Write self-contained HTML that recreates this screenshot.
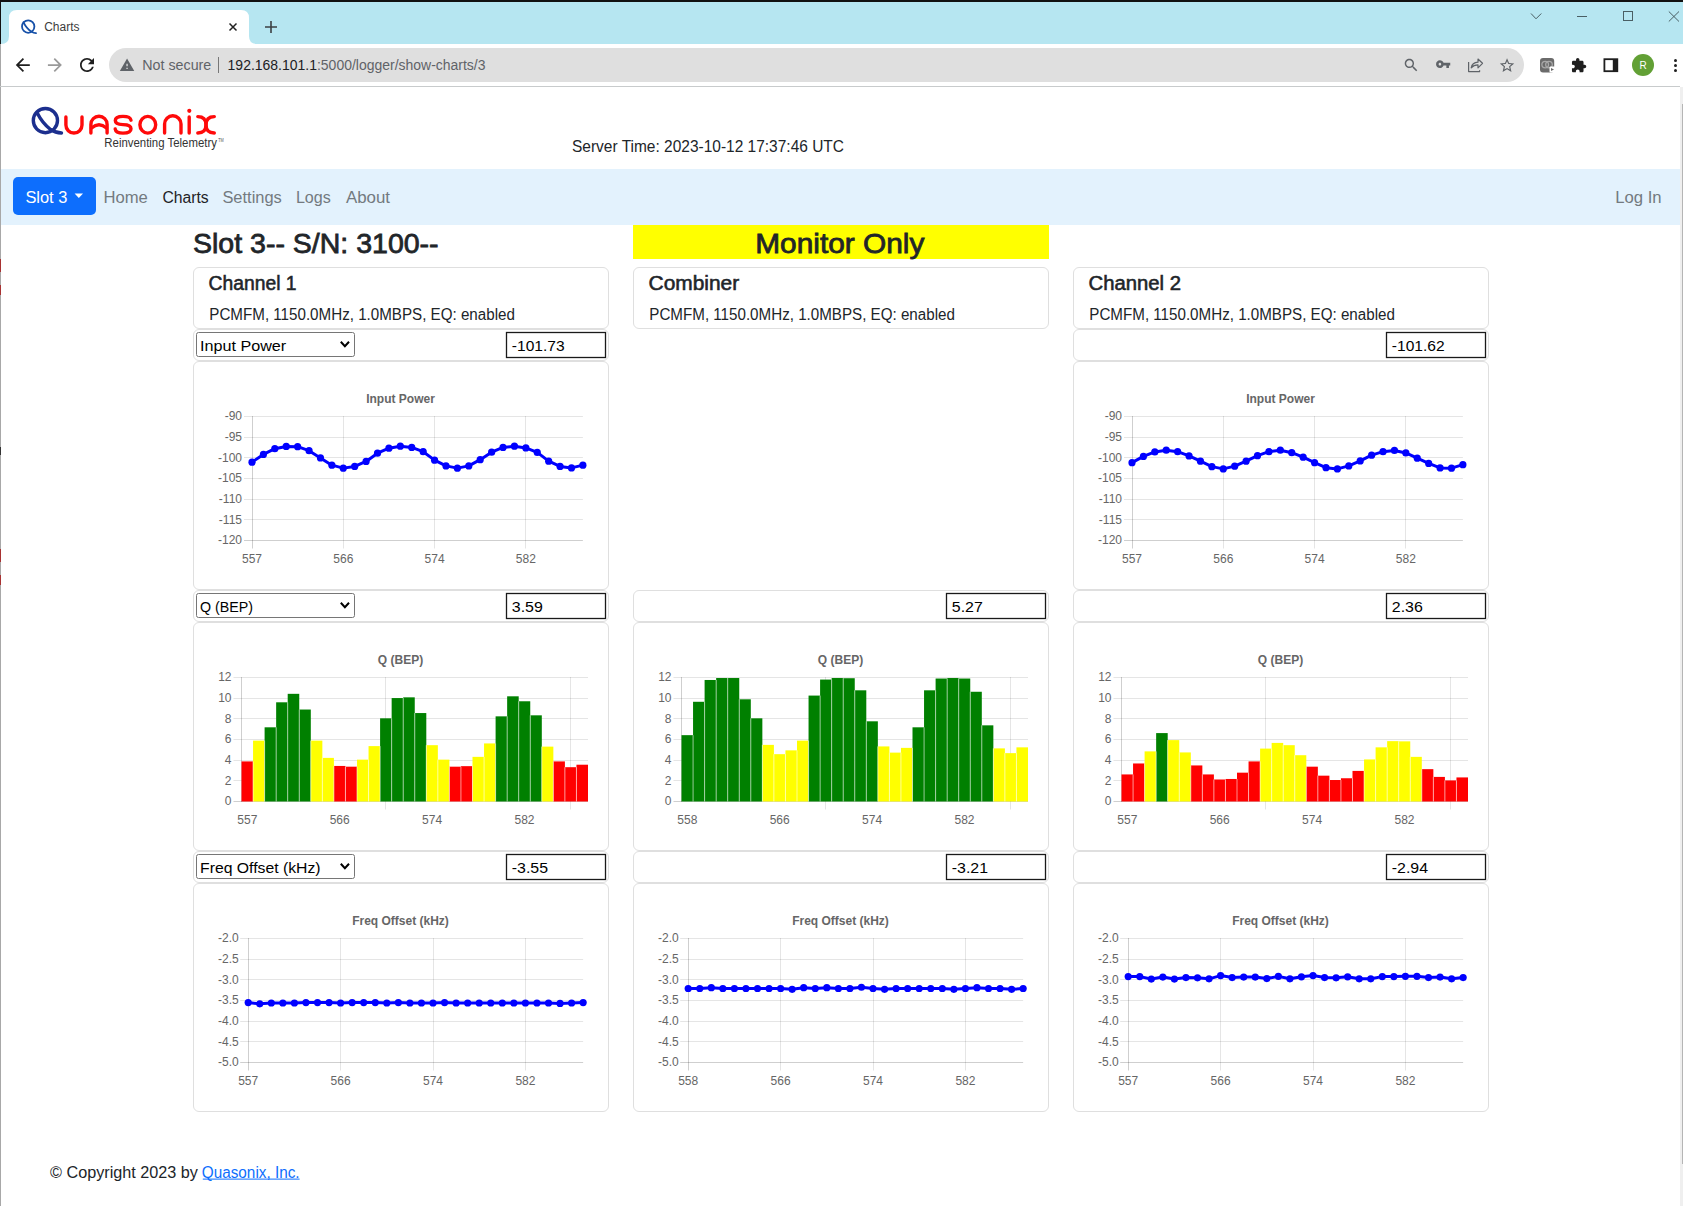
<!DOCTYPE html>
<html><head><meta charset="utf-8"><title>Charts</title>
<style>html,body{margin:0;padding:0;background:#fff;} body{width:1683px;height:1206px;position:relative;overflow:hidden;font-family:"Liberation Sans",sans-serif;}</style>
</head><body>

<div style="position:absolute;left:0;top:0;width:1683px;height:44px;background:#b6e6f1"></div>
<div style="position:absolute;left:0;top:0;width:1683px;height:2px;background:#111"></div>
<div style="position:absolute;left:0;top:0;width:1px;height:44px;background:#111"></div>
<div style="position:absolute;left:0;top:44px;width:1px;height:1162px;background:#a8a8a8"></div>
<div style="position:absolute;left:0;top:259px;width:1px;height:13px;background:#a83232"></div>
<div style="position:absolute;left:0;top:285px;width:1px;height:10px;background:#a83232"></div>
<div style="position:absolute;left:0;top:549px;width:1px;height:13px;background:#a83232"></div>
<div style="position:absolute;left:0;top:575px;width:1px;height:10px;background:#a83232"></div>
<div style="position:absolute;left:0;top:447px;width:1px;height:8px;background:#333"></div>
<div style="position:absolute;left:0;top:86px;width:1680px;height:1px;background:#c8cbcc"></div>
<div style="position:absolute;left:1680px;top:87px;width:3px;height:1119px;background:#efefef"></div>
<div style="position:absolute;left:1682px;top:104px;width:1px;height:1060px;background:#b5b5b5"></div>
<svg style="position:absolute;left:0;top:0" width="1683" height="87" viewBox="0 0 1683 87">
  <path d="M1 44 Q9 44 9 36 V18 Q9 10 17 10 H241 Q249 10 249 18 V36 Q249 44 257 44 Z" fill="#fff"/>
  <rect x="1" y="44" width="1679" height="42" fill="#fff"/>
  <!-- favicon Q -->
  <g fill="none" stroke="#1650a8" stroke-width="1.8" stroke-linecap="round">
    <circle cx="28.2" cy="26.6" r="6.2"/>
    <path d="M23.4 22.2 C25.5 26.5 28.5 30 31.5 31.8 C33 32.7 34.5 33.1 36 33.2"/>
  </g>
  <text x="44.2" y="31" font-family="Liberation Sans" font-size="12" fill="#3c3c3c" textLength="35.3" lengthAdjust="spacingAndGlyphs">Charts</text>
  <g stroke="#222" stroke-width="1.5" stroke-linecap="butt">
    <path d="M229.5 23.5 L236.5 30.5 M236.5 23.5 L229.5 30.5"/>
  </g>
  <g stroke="#3c4043" stroke-width="1.6">
    <path d="M271 21 V33 M265 27 H277"/>
  </g>
  <!-- window controls -->
  <g fill="none" stroke="#4a5f64" stroke-width="1">
    <path d="M1531 13.5 L1536 18.8 L1541.3 13.5"/>
    <path d="M1577 16.5 H1587"/>
    <rect x="1623.5" y="11.5" width="9" height="9"/>
    <path d="M1668.8 11.5 L1679 21.5 M1679 11.5 L1668.8 21.5"/>
  </g>
  <!-- nav icons -->
  <g transform="translate(12.3 54.5) scale(0.875)" fill="#1f1f1f"><path d="M20 11H7.83l5.59-5.59L12 4l-8 8 8 8 1.41-1.41L7.83 13H20v-2z"/></g>
  <g transform="translate(44.4 54.5) scale(0.875)" fill="#9a9a9a"><path d="M12 4l-1.41 1.41L16.17 11H4v2h12.17l-5.58 5.59L12 20l8-8z"/></g>
  <g transform="translate(76.5 54.5) scale(0.875)" fill="#1f1f1f"><path d="M17.65 6.35C16.2 4.9 14.21 4 12 4c-4.42 0-7.99 3.58-7.99 8s3.57 8 7.99 8c3.73 0 6.84-2.55 7.73-6h-2.08c-.82 2.33-3.04 4-5.65 4-3.31 0-6-2.69-6-6s2.69-6 6-6c1.66 0 3.14.69 4.22 1.78L13 11h7V4l-2.35 2.35z"/></g>
  <!-- omnibox -->
  <rect x="109" y="48" width="1415" height="34" rx="17" fill="#dfdfdf"/>
  <g transform="translate(119.2 57.2) scale(0.655)" fill="#5f6368"><path d="M1 21h22L12 2 1 21zm12-3h-2v-2h2v2zm0-4h-2v-4h2v4z"/></g>
  <text x="142.2" y="70" font-family="Liberation Sans" font-size="14" fill="#5f6368" textLength="69.1" lengthAdjust="spacingAndGlyphs">Not secure</text>
  <rect x="218" y="57" width="1" height="16" fill="#777"/>
  <text x="227.6" y="70" font-family="Liberation Sans" font-size="14" textLength="257.9" lengthAdjust="spacingAndGlyphs"><tspan fill="#202124">192.168.101.1</tspan><tspan fill="#5f6368">:5000/logger/show-charts/3</tspan></text>
  <g transform="translate(1402.6 56.6) scale(0.714)" fill="#5f6368"><path d="M15.5 14h-.79l-.28-.27C15.41 12.59 16 11.11 16 9.5 16 5.91 13.09 3 9.5 3S3 5.91 3 9.5 5.91 16 9.5 16c1.61 0 3.09-.59 4.23-1.57l.27.28v.79l5 4.99L20.49 19l-4.99-5zm-6 0C7.01 14 5 11.99 5 9.5S7.01 5 9.5 5 14 7.01 14 9.5 11.99 14 9.5 14z"/></g>
  <g transform="translate(1435.4 56.4) scale(0.645)" fill="#5f6368"><path d="M12.65 10C11.83 7.67 9.61 6 7 6c-3.31 0-6 2.69-6 6s2.69 6 6 6c2.61 0 4.83-1.67 5.65-4H17v4h4v-4h2v-4H12.65zM7 14c-1.1 0-2-.9-2-2s.9-2 2-2 2 .9 2 2-.9 2-2 2z"/></g>
  <g fill="none" stroke="#5f6368" stroke-width="1.2" stroke-linejoin="round">
    <path d="M1468.6 62 V71.6 H1479.6 V70.2"/>
    <path d="M1471.2 67.8 C1471.8 64.4 1474.2 62.4 1478 62.2 V59 L1482.5 63.3 L1478 67.8 V64.8 C1475.2 64.8 1472.8 65.8 1471.2 67.8 Z"/>
  </g>
  <g transform="translate(1498.4 56.8) scale(0.72)" fill="#5f6368"><path d="M22 9.24l-7.19-.62L12 2 9.19 8.63 2 9.24l5.46 4.73L5.82 21 12 17.27 18.18 21l-1.63-7.03L22 9.24zM12 15.4l-3.76 2.27 1-4.28-3.32-2.88 4.38-.38L12 6.1l1.71 4.04 4.38.38-3.32 2.88 1 4.28L12 15.4z"/></g>
  <!-- extension grey -->
  <rect x="1540" y="58" width="14.2" height="14.4" rx="3" fill="#6b6b6b"/>
  <circle cx="1545.2" cy="64.6" r="3.3" fill="none" stroke="#a8a8a8" stroke-width="1.3"/>
  <circle cx="1549" cy="64.6" r="3.3" fill="none" stroke="#a8a8a8" stroke-width="1.3"/>
  <rect x="1549.5" y="66.5" width="6" height="6" rx="1" fill="#fff"/>
  <path d="M1551 68 L1554 69.5 L1551 71 Z" fill="#6b6b6b"/>
  <g transform="translate(1570.6 57.3) scale(0.68)" fill="#1f1f1f"><path d="M20.5 11H19V7c0-1.1-.9-2-2-2h-4V3.5C13 2.12 11.88 1 10.5 1S8 2.12 8 3.5V5H4c-1.1 0-1.99.9-1.99 2v3.8H3.5c1.49 0 2.7 1.21 2.7 2.7s-1.21 2.7-2.7 2.7H2V20c0 1.1.9 2 2 2h3.8v-1.5c0-1.49 1.21-2.7 2.7-2.7 1.49 0 2.7 1.21 2.7 2.7V22H17c1.1 0 2-.9 2-2v-4h1.5c1.38 0 2.5-1.12 2.5-2.5S21.88 11 20.5 11z"/></g>
  <rect x="1604.4" y="59.2" width="12.9" height="12" fill="none" stroke="#1f1f1f" stroke-width="1.8"/>
  <rect x="1612.8" y="59.2" width="4.9" height="12" fill="#1f1f1f"/>
  <circle cx="1643" cy="65" r="11" fill="#62a035"/>
  <text x="1643.2" y="69" text-anchor="middle" font-family="Liberation Sans" font-size="10" fill="#fff">R</text>
  <g fill="#1f1f1f"><circle cx="1675.5" cy="60.4" r="1.5"/><circle cx="1675.5" cy="65.4" r="1.5"/><circle cx="1675.5" cy="70.4" r="1.5"/></g>
</svg>

<svg style="position:absolute;left:0;top:0" width="1683" height="1206" viewBox="0 0 1683 1206" font-family="Liberation Sans">

<g fill="none" stroke-linecap="round" stroke-width="3.4">
  <circle stroke="#1c2f8e" cx="45.4" cy="120.6" r="12.1"/>
  <path stroke="#1c2f8e" d="M37.4 113.2 C40.5 119.5 45 125 50.5 129.5 C53.5 131.5 57 132.8 61.5 133"/>
  <path stroke="#ff0a0a" d="M65.9 117 V125 A8.05 8.05 0 0 0 82 125 V117"/>
  <path stroke="#ff0a0a" d="M90.9 133 V124.4 A8.1 8.1 0 0 1 107.1 124.4 V133"/>
  <path stroke="#ff0a0a" d="M91.5 128 Q99 121.5 106.5 128"/>
  <path stroke="#ff0a0a" d="M131 120.2 C130.5 117.6 127.6 116.4 123 116.4 C118.2 116.4 115.3 117.8 115.3 120.6 C115.3 123.6 118.2 124.6 123 124.6 C128 124.6 131 125.6 131 128.8 C131 131.8 128 133.1 123 133.1 C118.4 133.1 115.6 131.8 115.2 129"/>
  <ellipse stroke="#ff0a0a" cx="147.8" cy="124.75" rx="7.9" ry="8.4"/>
  <path stroke="#ff0a0a" d="M164.6 133 V124 A8.2 8.2 0 0 1 181 124 V133"/>
  <path stroke="#ff0a0a" d="M189.2 117 V133"/>
  <path stroke="#ff0a0a" d="M197.8 116.6 C204 116.6 206 120 206 124.8 C206 129.5 204 133 197.8 133"/>
  <path stroke="#ff0a0a" d="M214.3 116.6 C208 116.6 206 120 206 124.8 C206 129.5 208 133 214.3 133"/>
</g>
<circle cx="189.3" cy="110.8" r="2.1" fill="#ff0a0a"/>
<text x="104.3" y="147" font-size="12" fill="#333" text-anchor="start" textLength="112.7" lengthAdjust="spacingAndGlyphs">Reinventing Telemetry</text>
<text x="218.3" y="142" font-size="5" fill="#555" textLength="5.5" lengthAdjust="spacingAndGlyphs">TM</text>

<text x="572" y="151.6" font-size="16.4" fill="#212529" text-anchor="start" textLength="272" lengthAdjust="spacingAndGlyphs">Server Time: 2023-10-12 17:37:46 UTC</text>
<rect x="1" y="169" width="1679" height="56" fill="#e3f2fd"/>
<rect x="13" y="177" width="83" height="38" rx="5" fill="#0d6efd"/>
<text x="25.4" y="202.6" font-size="16" fill="#fff" text-anchor="start" textLength="42" lengthAdjust="spacingAndGlyphs">Slot 3</text>
<path d="M74.6 193.6 H83 L78.8 197.9 Z" fill="#fff"/>
<text x="103.4" y="202.8" font-size="16" fill="#737a80" text-anchor="start" textLength="44.4" lengthAdjust="spacingAndGlyphs">Home</text>
<text x="162.4" y="202.8" font-size="16" fill="#1f2326" text-anchor="start" textLength="46.3" lengthAdjust="spacingAndGlyphs">Charts</text>
<text x="222.4" y="202.8" font-size="16" fill="#737a80" text-anchor="start" textLength="59.4" lengthAdjust="spacingAndGlyphs">Settings</text>
<text x="295.9" y="202.8" font-size="16" fill="#737a80" text-anchor="start" textLength="34.9" lengthAdjust="spacingAndGlyphs">Logs</text>
<text x="345.9" y="202.8" font-size="16" fill="#737a80" text-anchor="start" textLength="44.1" lengthAdjust="spacingAndGlyphs">About</text>
<text x="1615.2" y="202.8" font-size="16" fill="#737a80" text-anchor="start" textLength="46.4" lengthAdjust="spacingAndGlyphs">Log In</text>
<text x="193" y="253.1" font-size="28" fill="#212529" stroke="#212529" stroke-width="0.78" text-anchor="start" textLength="245.6" lengthAdjust="spacingAndGlyphs">Slot 3-- S/N: 3100--</text>
<rect x="633" y="225" width="416" height="34" fill="#ffff00"/>
<text x="755.2" y="252.8" font-size="28" fill="#212529" stroke="#212529" stroke-width="0.78" text-anchor="start" textLength="169.2" lengthAdjust="spacingAndGlyphs">Monitor Only</text>
<rect x="193.5" y="267.5" width="415" height="61" rx="5.5" fill="#fff" stroke="#dfdfdf" stroke-width="1"/>
<text x="208.6" y="289.8" font-size="20" fill="#212529" stroke="#212529" stroke-width="0.56" text-anchor="start" textLength="87.9" lengthAdjust="spacingAndGlyphs">Channel 1</text>
<text x="209.3" y="319.9" font-size="16" fill="#212529" text-anchor="start" textLength="305.6" lengthAdjust="spacingAndGlyphs">PCMFM, 1150.0MHz, 1.0MBPS, EQ: enabled</text>
<rect x="193.5" y="329.5" width="415" height="31" rx="5.5" fill="#fff" stroke="#dfdfdf" stroke-width="1"/>
<rect x="193.5" y="590.5" width="415" height="31" rx="5.5" fill="#fff" stroke="#dfdfdf" stroke-width="1"/>
<rect x="193.5" y="851.5" width="415" height="31" rx="5.5" fill="#fff" stroke="#dfdfdf" stroke-width="1"/>
<rect x="193.5" y="361.5" width="415" height="228" rx="5.5" fill="#fff" stroke="#dfdfdf" stroke-width="1"/>
<rect x="193.5" y="622.5" width="415" height="228" rx="5.5" fill="#fff" stroke="#dfdfdf" stroke-width="1"/>
<rect x="193.5" y="883.5" width="415" height="228" rx="5.5" fill="#fff" stroke="#dfdfdf" stroke-width="1"/>
<rect x="633.5" y="267.5" width="415" height="61" rx="5.5" fill="#fff" stroke="#dfdfdf" stroke-width="1"/>
<text x="648.6" y="289.8" font-size="20" fill="#212529" stroke="#212529" stroke-width="0.56" text-anchor="start" textLength="90.6" lengthAdjust="spacingAndGlyphs">Combiner</text>
<text x="649.3" y="319.9" font-size="16" fill="#212529" text-anchor="start" textLength="305.6" lengthAdjust="spacingAndGlyphs">PCMFM, 1150.0MHz, 1.0MBPS, EQ: enabled</text>
<rect x="633.5" y="590.5" width="415" height="31" rx="5.5" fill="#fff" stroke="#dfdfdf" stroke-width="1"/>
<rect x="633.5" y="851.5" width="415" height="31" rx="5.5" fill="#fff" stroke="#dfdfdf" stroke-width="1"/>
<rect x="633.5" y="622.5" width="415" height="228" rx="5.5" fill="#fff" stroke="#dfdfdf" stroke-width="1"/>
<rect x="633.5" y="883.5" width="415" height="228" rx="5.5" fill="#fff" stroke="#dfdfdf" stroke-width="1"/>
<rect x="1073.5" y="267.5" width="415" height="61" rx="5.5" fill="#fff" stroke="#dfdfdf" stroke-width="1"/>
<text x="1088.6" y="289.8" font-size="20" fill="#212529" stroke="#212529" stroke-width="0.56" text-anchor="start" textLength="92.4" lengthAdjust="spacingAndGlyphs">Channel 2</text>
<text x="1089.3" y="319.9" font-size="16" fill="#212529" text-anchor="start" textLength="305.6" lengthAdjust="spacingAndGlyphs">PCMFM, 1150.0MHz, 1.0MBPS, EQ: enabled</text>
<rect x="1073.5" y="329.5" width="415" height="31" rx="5.5" fill="#fff" stroke="#dfdfdf" stroke-width="1"/>
<rect x="1073.5" y="590.5" width="415" height="31" rx="5.5" fill="#fff" stroke="#dfdfdf" stroke-width="1"/>
<rect x="1073.5" y="851.5" width="415" height="31" rx="5.5" fill="#fff" stroke="#dfdfdf" stroke-width="1"/>
<rect x="1073.5" y="361.5" width="415" height="228" rx="5.5" fill="#fff" stroke="#dfdfdf" stroke-width="1"/>
<rect x="1073.5" y="622.5" width="415" height="228" rx="5.5" fill="#fff" stroke="#dfdfdf" stroke-width="1"/>
<rect x="1073.5" y="883.5" width="415" height="228" rx="5.5" fill="#fff" stroke="#dfdfdf" stroke-width="1"/>
<rect x="196.5" y="332.5" width="158" height="24" rx="2" fill="#fff" stroke="#767676"/>
<text x="200.0" y="350.9" font-size="15" fill="#000" text-anchor="start" textLength="86.2" lengthAdjust="spacingAndGlyphs">Input Power</text>
<path d="M340.8 341.8 L344.9 346.2 L349 341.8" fill="none" stroke="#000" stroke-width="2"/>
<rect x="196.5" y="593.5" width="158" height="24" rx="2" fill="#fff" stroke="#767676"/>
<text x="200.0" y="611.9" font-size="15" fill="#000" text-anchor="start" textLength="53" lengthAdjust="spacingAndGlyphs">Q (BEP)</text>
<path d="M340.8 602.8 L344.9 607.2 L349 602.8" fill="none" stroke="#000" stroke-width="2"/>
<rect x="196.5" y="854.5" width="158" height="24" rx="2" fill="#fff" stroke="#767676"/>
<text x="200.0" y="872.9" font-size="15" fill="#000" text-anchor="start" textLength="120.6" lengthAdjust="spacingAndGlyphs">Freq Offset (kHz)</text>
<path d="M340.8 863.8 L344.9 868.2 L349 863.8" fill="none" stroke="#000" stroke-width="2"/>
<rect x="506.5" y="332.5" width="99" height="25" fill="#fff" stroke="#1a1a1a" stroke-width="1.3"/>
<text x="511.8" y="350.8" font-size="15" fill="#000" text-anchor="start" textLength="52.8" lengthAdjust="spacingAndGlyphs">-101.73</text>
<rect x="506.5" y="593.5" width="99" height="25" fill="#fff" stroke="#1a1a1a" stroke-width="1.3"/>
<text x="511.8" y="611.8" font-size="15" fill="#000" text-anchor="start" textLength="31.0" lengthAdjust="spacingAndGlyphs">3.59</text>
<rect x="506.5" y="854.5" width="99" height="25" fill="#fff" stroke="#1a1a1a" stroke-width="1.3"/>
<text x="511.8" y="872.8" font-size="15" fill="#000" text-anchor="start" textLength="36.2" lengthAdjust="spacingAndGlyphs">-3.55</text>
<rect x="946.5" y="593.5" width="99" height="25" fill="#fff" stroke="#1a1a1a" stroke-width="1.3"/>
<text x="951.8" y="611.8" font-size="15" fill="#000" text-anchor="start" textLength="31.0" lengthAdjust="spacingAndGlyphs">5.27</text>
<rect x="946.5" y="854.5" width="99" height="25" fill="#fff" stroke="#1a1a1a" stroke-width="1.3"/>
<text x="951.8" y="872.8" font-size="15" fill="#000" text-anchor="start" textLength="36.2" lengthAdjust="spacingAndGlyphs">-3.21</text>
<rect x="1386.5" y="332.5" width="99" height="25" fill="#fff" stroke="#1a1a1a" stroke-width="1.3"/>
<text x="1391.8" y="350.8" font-size="15" fill="#000" text-anchor="start" textLength="52.8" lengthAdjust="spacingAndGlyphs">-101.62</text>
<rect x="1386.5" y="593.5" width="99" height="25" fill="#fff" stroke="#1a1a1a" stroke-width="1.3"/>
<text x="1391.8" y="611.8" font-size="15" fill="#000" text-anchor="start" textLength="31.0" lengthAdjust="spacingAndGlyphs">2.36</text>
<rect x="1386.5" y="854.5" width="99" height="25" fill="#fff" stroke="#1a1a1a" stroke-width="1.3"/>
<text x="1391.8" y="872.8" font-size="15" fill="#000" text-anchor="start" textLength="36.2" lengthAdjust="spacingAndGlyphs">-2.94</text>
<line x1="244.0" y1="416.5" x2="582.9" y2="416.5" stroke="rgba(0,0,0,0.1)" stroke-width="1"/>
<text x="242" y="420.4" text-anchor="end" font-size="12" fill="#666">-90</text>
<line x1="244.0" y1="437.5" x2="582.9" y2="437.5" stroke="rgba(0,0,0,0.1)" stroke-width="1"/>
<text x="242" y="441.1" text-anchor="end" font-size="12" fill="#666">-95</text>
<line x1="244.0" y1="457.5" x2="582.9" y2="457.5" stroke="rgba(0,0,0,0.1)" stroke-width="1"/>
<text x="242" y="461.7" text-anchor="end" font-size="12" fill="#666">-100</text>
<line x1="244.0" y1="478.5" x2="582.9" y2="478.5" stroke="rgba(0,0,0,0.1)" stroke-width="1"/>
<text x="242" y="482.4" text-anchor="end" font-size="12" fill="#666">-105</text>
<line x1="244.0" y1="499.5" x2="582.9" y2="499.5" stroke="rgba(0,0,0,0.1)" stroke-width="1"/>
<text x="242" y="503.1" text-anchor="end" font-size="12" fill="#666">-110</text>
<line x1="244.0" y1="519.5" x2="582.9" y2="519.5" stroke="rgba(0,0,0,0.1)" stroke-width="1"/>
<text x="242" y="523.7" text-anchor="end" font-size="12" fill="#666">-115</text>
<line x1="244.0" y1="540.5" x2="582.9" y2="540.5" stroke="rgba(0,0,0,0.19)" stroke-width="1"/>
<text x="242" y="544.4" text-anchor="end" font-size="12" fill="#666">-120</text>
<line x1="252.5" y1="416.0" x2="252.5" y2="548.5" stroke="rgba(0,0,0,0.19)" stroke-width="1"/>
<text x="252.0" y="562.5" text-anchor="middle" font-size="12" fill="#666">557</text>
<line x1="343.5" y1="416.0" x2="343.5" y2="548.5" stroke="rgba(0,0,0,0.1)" stroke-width="1"/>
<text x="343.3" y="562.5" text-anchor="middle" font-size="12" fill="#666">566</text>
<line x1="434.5" y1="416.0" x2="434.5" y2="548.5" stroke="rgba(0,0,0,0.1)" stroke-width="1"/>
<text x="434.6" y="562.5" text-anchor="middle" font-size="12" fill="#666">574</text>
<line x1="525.5" y1="416.0" x2="525.5" y2="548.5" stroke="rgba(0,0,0,0.1)" stroke-width="1"/>
<text x="525.8" y="562.5" text-anchor="middle" font-size="12" fill="#666">582</text>
<text x="400.5" y="402.6" text-anchor="middle" font-size="12" font-weight="bold" fill="#666">Input Power</text>
<path d="M252.00 462.16 L263.41 454.42 L274.82 448.68 L286.23 446.44 L297.64 446.69 L309.05 450.68 L320.46 457.92 L331.87 465.15 L343.28 468.14 L354.69 466.40 L366.10 461.41 L377.51 453.18 L388.92 448.19 L400.33 446.19 L411.74 447.44 L423.16 451.68 L434.57 460.16 L445.98 465.90 L457.39 468.14 L468.80 465.90 L480.21 459.66 L491.62 452.18 L503.03 447.44 L514.44 446.19 L525.85 447.94 L537.26 452.43 L548.67 461.16 L560.08 466.40 L571.49 467.90 L582.90 465.15" fill="none" stroke="#0000ff" stroke-width="3" stroke-linejoin="round"/>
<circle cx="252.00" cy="462.16" r="3.6" fill="#0000ff"/>
<circle cx="263.41" cy="454.42" r="3.6" fill="#0000ff"/>
<circle cx="274.82" cy="448.68" r="3.6" fill="#0000ff"/>
<circle cx="286.23" cy="446.44" r="3.6" fill="#0000ff"/>
<circle cx="297.64" cy="446.69" r="3.6" fill="#0000ff"/>
<circle cx="309.05" cy="450.68" r="3.6" fill="#0000ff"/>
<circle cx="320.46" cy="457.92" r="3.6" fill="#0000ff"/>
<circle cx="331.87" cy="465.15" r="3.6" fill="#0000ff"/>
<circle cx="343.28" cy="468.14" r="3.6" fill="#0000ff"/>
<circle cx="354.69" cy="466.40" r="3.6" fill="#0000ff"/>
<circle cx="366.10" cy="461.41" r="3.6" fill="#0000ff"/>
<circle cx="377.51" cy="453.18" r="3.6" fill="#0000ff"/>
<circle cx="388.92" cy="448.19" r="3.6" fill="#0000ff"/>
<circle cx="400.33" cy="446.19" r="3.6" fill="#0000ff"/>
<circle cx="411.74" cy="447.44" r="3.6" fill="#0000ff"/>
<circle cx="423.16" cy="451.68" r="3.6" fill="#0000ff"/>
<circle cx="434.57" cy="460.16" r="3.6" fill="#0000ff"/>
<circle cx="445.98" cy="465.90" r="3.6" fill="#0000ff"/>
<circle cx="457.39" cy="468.14" r="3.6" fill="#0000ff"/>
<circle cx="468.80" cy="465.90" r="3.6" fill="#0000ff"/>
<circle cx="480.21" cy="459.66" r="3.6" fill="#0000ff"/>
<circle cx="491.62" cy="452.18" r="3.6" fill="#0000ff"/>
<circle cx="503.03" cy="447.44" r="3.6" fill="#0000ff"/>
<circle cx="514.44" cy="446.19" r="3.6" fill="#0000ff"/>
<circle cx="525.85" cy="447.94" r="3.6" fill="#0000ff"/>
<circle cx="537.26" cy="452.43" r="3.6" fill="#0000ff"/>
<circle cx="548.67" cy="461.16" r="3.6" fill="#0000ff"/>
<circle cx="560.08" cy="466.40" r="3.6" fill="#0000ff"/>
<circle cx="571.49" cy="467.90" r="3.6" fill="#0000ff"/>
<circle cx="582.90" cy="465.15" r="3.6" fill="#0000ff"/>
<line x1="1124.0" y1="416.5" x2="1462.9" y2="416.5" stroke="rgba(0,0,0,0.1)" stroke-width="1"/>
<text x="1122" y="420.4" text-anchor="end" font-size="12" fill="#666">-90</text>
<line x1="1124.0" y1="437.5" x2="1462.9" y2="437.5" stroke="rgba(0,0,0,0.1)" stroke-width="1"/>
<text x="1122" y="441.1" text-anchor="end" font-size="12" fill="#666">-95</text>
<line x1="1124.0" y1="457.5" x2="1462.9" y2="457.5" stroke="rgba(0,0,0,0.1)" stroke-width="1"/>
<text x="1122" y="461.7" text-anchor="end" font-size="12" fill="#666">-100</text>
<line x1="1124.0" y1="478.5" x2="1462.9" y2="478.5" stroke="rgba(0,0,0,0.1)" stroke-width="1"/>
<text x="1122" y="482.4" text-anchor="end" font-size="12" fill="#666">-105</text>
<line x1="1124.0" y1="499.5" x2="1462.9" y2="499.5" stroke="rgba(0,0,0,0.1)" stroke-width="1"/>
<text x="1122" y="503.1" text-anchor="end" font-size="12" fill="#666">-110</text>
<line x1="1124.0" y1="519.5" x2="1462.9" y2="519.5" stroke="rgba(0,0,0,0.1)" stroke-width="1"/>
<text x="1122" y="523.7" text-anchor="end" font-size="12" fill="#666">-115</text>
<line x1="1124.0" y1="540.5" x2="1462.9" y2="540.5" stroke="rgba(0,0,0,0.19)" stroke-width="1"/>
<text x="1122" y="544.4" text-anchor="end" font-size="12" fill="#666">-120</text>
<line x1="1132.5" y1="416.0" x2="1132.5" y2="548.5" stroke="rgba(0,0,0,0.19)" stroke-width="1"/>
<text x="1132.0" y="562.5" text-anchor="middle" font-size="12" fill="#666">557</text>
<line x1="1223.5" y1="416.0" x2="1223.5" y2="548.5" stroke="rgba(0,0,0,0.1)" stroke-width="1"/>
<text x="1223.3" y="562.5" text-anchor="middle" font-size="12" fill="#666">566</text>
<line x1="1314.5" y1="416.0" x2="1314.5" y2="548.5" stroke="rgba(0,0,0,0.1)" stroke-width="1"/>
<text x="1314.6" y="562.5" text-anchor="middle" font-size="12" fill="#666">574</text>
<line x1="1405.5" y1="416.0" x2="1405.5" y2="548.5" stroke="rgba(0,0,0,0.1)" stroke-width="1"/>
<text x="1405.8" y="562.5" text-anchor="middle" font-size="12" fill="#666">582</text>
<text x="1280.5" y="402.6" text-anchor="middle" font-size="12" font-weight="bold" fill="#666">Input Power</text>
<path d="M1132.00 462.66 L1143.41 456.42 L1154.82 451.93 L1166.23 450.18 L1177.64 451.68 L1189.05 455.92 L1200.46 461.16 L1211.87 466.65 L1223.28 468.89 L1234.69 466.15 L1246.10 461.16 L1257.51 455.67 L1268.92 451.68 L1280.33 450.18 L1291.74 452.68 L1303.16 457.17 L1314.57 462.66 L1325.98 467.65 L1337.39 468.89 L1348.80 465.90 L1360.21 460.91 L1371.62 455.17 L1383.03 451.68 L1394.44 450.43 L1405.85 452.93 L1417.26 458.17 L1428.67 463.40 L1440.08 467.90 L1451.49 468.14 L1462.90 464.65" fill="none" stroke="#0000ff" stroke-width="3" stroke-linejoin="round"/>
<circle cx="1132.00" cy="462.66" r="3.6" fill="#0000ff"/>
<circle cx="1143.41" cy="456.42" r="3.6" fill="#0000ff"/>
<circle cx="1154.82" cy="451.93" r="3.6" fill="#0000ff"/>
<circle cx="1166.23" cy="450.18" r="3.6" fill="#0000ff"/>
<circle cx="1177.64" cy="451.68" r="3.6" fill="#0000ff"/>
<circle cx="1189.05" cy="455.92" r="3.6" fill="#0000ff"/>
<circle cx="1200.46" cy="461.16" r="3.6" fill="#0000ff"/>
<circle cx="1211.87" cy="466.65" r="3.6" fill="#0000ff"/>
<circle cx="1223.28" cy="468.89" r="3.6" fill="#0000ff"/>
<circle cx="1234.69" cy="466.15" r="3.6" fill="#0000ff"/>
<circle cx="1246.10" cy="461.16" r="3.6" fill="#0000ff"/>
<circle cx="1257.51" cy="455.67" r="3.6" fill="#0000ff"/>
<circle cx="1268.92" cy="451.68" r="3.6" fill="#0000ff"/>
<circle cx="1280.33" cy="450.18" r="3.6" fill="#0000ff"/>
<circle cx="1291.74" cy="452.68" r="3.6" fill="#0000ff"/>
<circle cx="1303.16" cy="457.17" r="3.6" fill="#0000ff"/>
<circle cx="1314.57" cy="462.66" r="3.6" fill="#0000ff"/>
<circle cx="1325.98" cy="467.65" r="3.6" fill="#0000ff"/>
<circle cx="1337.39" cy="468.89" r="3.6" fill="#0000ff"/>
<circle cx="1348.80" cy="465.90" r="3.6" fill="#0000ff"/>
<circle cx="1360.21" cy="460.91" r="3.6" fill="#0000ff"/>
<circle cx="1371.62" cy="455.17" r="3.6" fill="#0000ff"/>
<circle cx="1383.03" cy="451.68" r="3.6" fill="#0000ff"/>
<circle cx="1394.44" cy="450.43" r="3.6" fill="#0000ff"/>
<circle cx="1405.85" cy="452.93" r="3.6" fill="#0000ff"/>
<circle cx="1417.26" cy="458.17" r="3.6" fill="#0000ff"/>
<circle cx="1428.67" cy="463.40" r="3.6" fill="#0000ff"/>
<circle cx="1440.08" cy="467.90" r="3.6" fill="#0000ff"/>
<circle cx="1451.49" cy="468.14" r="3.6" fill="#0000ff"/>
<circle cx="1462.90" cy="464.65" r="3.6" fill="#0000ff"/>
<line x1="233.5" y1="677.5" x2="588" y2="677.5" stroke="rgba(0,0,0,0.1)" stroke-width="1"/>
<text x="231.5" y="681.4" text-anchor="end" font-size="12" fill="#666">12</text>
<line x1="233.5" y1="698.5" x2="588" y2="698.5" stroke="rgba(0,0,0,0.1)" stroke-width="1"/>
<text x="231.5" y="702.1" text-anchor="end" font-size="12" fill="#666">10</text>
<line x1="233.5" y1="718.5" x2="588" y2="718.5" stroke="rgba(0,0,0,0.1)" stroke-width="1"/>
<text x="231.5" y="722.7" text-anchor="end" font-size="12" fill="#666">8</text>
<line x1="233.5" y1="739.5" x2="588" y2="739.5" stroke="rgba(0,0,0,0.1)" stroke-width="1"/>
<text x="231.5" y="743.4" text-anchor="end" font-size="12" fill="#666">6</text>
<line x1="233.5" y1="760.5" x2="588" y2="760.5" stroke="rgba(0,0,0,0.1)" stroke-width="1"/>
<text x="231.5" y="764.1" text-anchor="end" font-size="12" fill="#666">4</text>
<line x1="233.5" y1="780.5" x2="588" y2="780.5" stroke="rgba(0,0,0,0.1)" stroke-width="1"/>
<text x="231.5" y="784.7" text-anchor="end" font-size="12" fill="#666">2</text>
<line x1="233.5" y1="801.5" x2="588" y2="801.5" stroke="rgba(0,0,0,0.19)" stroke-width="1"/>
<text x="231.5" y="805.4" text-anchor="end" font-size="12" fill="#666">0</text>
<line x1="241.5" y1="677.0" x2="241.5" y2="802.0" stroke="rgba(0,0,0,0.19)" stroke-width="1"/>
<line x1="385.5" y1="677.0" x2="385.5" y2="809.5" stroke="rgba(0,0,0,0.1)" stroke-width="1"/>
<line x1="570.5" y1="677.0" x2="570.5" y2="809.5" stroke="rgba(0,0,0,0.1)" stroke-width="1"/>
<text x="247.3" y="823.5" text-anchor="middle" font-size="12" fill="#666">557</text>
<text x="339.7" y="823.5" text-anchor="middle" font-size="12" fill="#666">566</text>
<text x="432.1" y="823.5" text-anchor="middle" font-size="12" fill="#666">574</text>
<text x="524.5" y="823.5" text-anchor="middle" font-size="12" fill="#666">582</text>
<text x="400.5" y="663.6" text-anchor="middle" font-size="12" font-weight="bold" fill="#666">Q (BEP)</text>
<rect x="241.50" y="761.41" width="11.55" height="40.09" fill="#ff0000"/>
<rect x="253.05" y="740.64" width="11.55" height="60.86" fill="#ffff00"/>
<rect x="264.60" y="727.31" width="11.55" height="74.19" fill="#008000"/>
<rect x="276.15" y="702.30" width="11.55" height="99.20" fill="#008000"/>
<rect x="287.70" y="693.83" width="11.55" height="107.67" fill="#008000"/>
<rect x="299.25" y="709.53" width="11.55" height="91.97" fill="#008000"/>
<rect x="310.80" y="740.64" width="11.55" height="60.86" fill="#ffff00"/>
<rect x="322.35" y="757.89" width="11.55" height="43.61" fill="#ffff00"/>
<rect x="333.90" y="765.95" width="11.55" height="35.55" fill="#ff0000"/>
<rect x="345.45" y="766.68" width="11.55" height="34.82" fill="#ff0000"/>
<rect x="357.00" y="759.65" width="11.55" height="41.85" fill="#ffff00"/>
<rect x="368.55" y="746.11" width="11.55" height="55.39" fill="#ffff00"/>
<rect x="380.10" y="718.32" width="11.55" height="83.18" fill="#008000"/>
<rect x="391.65" y="698.06" width="11.55" height="103.44" fill="#008000"/>
<rect x="403.20" y="697.34" width="11.55" height="104.16" fill="#008000"/>
<rect x="414.75" y="713.05" width="11.55" height="88.45" fill="#008000"/>
<rect x="426.30" y="745.18" width="11.55" height="56.32" fill="#ffff00"/>
<rect x="437.85" y="759.65" width="11.55" height="41.85" fill="#ffff00"/>
<rect x="449.40" y="766.68" width="11.55" height="34.82" fill="#ff0000"/>
<rect x="460.95" y="766.16" width="11.55" height="35.34" fill="#ff0000"/>
<rect x="472.50" y="756.86" width="11.55" height="44.64" fill="#ffff00"/>
<rect x="484.05" y="743.43" width="11.55" height="58.07" fill="#ffff00"/>
<rect x="495.60" y="716.35" width="11.55" height="85.15" fill="#008000"/>
<rect x="507.15" y="696.31" width="11.55" height="105.19" fill="#008000"/>
<rect x="518.70" y="701.27" width="11.55" height="100.23" fill="#008000"/>
<rect x="530.25" y="715.32" width="11.55" height="86.18" fill="#008000"/>
<rect x="541.80" y="746.63" width="11.55" height="54.87" fill="#ffff00"/>
<rect x="553.35" y="761.41" width="11.55" height="40.09" fill="#ff0000"/>
<rect x="564.90" y="767.19" width="11.55" height="34.31" fill="#ff0000"/>
<rect x="576.45" y="764.71" width="11.55" height="36.79" fill="#ff0000"/>
<line x1="253.05" y1="761.41" x2="253.05" y2="801.50" stroke="rgba(255,255,255,0.55)" stroke-width="1"/>
<line x1="264.60" y1="740.64" x2="264.60" y2="801.50" stroke="rgba(255,255,255,0.55)" stroke-width="1"/>
<line x1="276.15" y1="727.31" x2="276.15" y2="801.50" stroke="rgba(255,255,255,0.55)" stroke-width="1"/>
<line x1="287.70" y1="702.30" x2="287.70" y2="801.50" stroke="rgba(255,255,255,0.55)" stroke-width="1"/>
<line x1="299.25" y1="709.53" x2="299.25" y2="801.50" stroke="rgba(255,255,255,0.55)" stroke-width="1"/>
<line x1="310.80" y1="740.64" x2="310.80" y2="801.50" stroke="rgba(255,255,255,0.55)" stroke-width="1"/>
<line x1="322.35" y1="757.89" x2="322.35" y2="801.50" stroke="rgba(255,255,255,0.55)" stroke-width="1"/>
<line x1="333.90" y1="765.95" x2="333.90" y2="801.50" stroke="rgba(255,255,255,0.55)" stroke-width="1"/>
<line x1="345.45" y1="766.68" x2="345.45" y2="801.50" stroke="rgba(255,255,255,0.55)" stroke-width="1"/>
<line x1="357.00" y1="766.68" x2="357.00" y2="801.50" stroke="rgba(255,255,255,0.55)" stroke-width="1"/>
<line x1="368.55" y1="759.65" x2="368.55" y2="801.50" stroke="rgba(255,255,255,0.55)" stroke-width="1"/>
<line x1="380.10" y1="746.11" x2="380.10" y2="801.50" stroke="rgba(255,255,255,0.55)" stroke-width="1"/>
<line x1="391.65" y1="718.32" x2="391.65" y2="801.50" stroke="rgba(255,255,255,0.55)" stroke-width="1"/>
<line x1="403.20" y1="698.06" x2="403.20" y2="801.50" stroke="rgba(255,255,255,0.55)" stroke-width="1"/>
<line x1="414.75" y1="713.05" x2="414.75" y2="801.50" stroke="rgba(255,255,255,0.55)" stroke-width="1"/>
<line x1="426.30" y1="745.18" x2="426.30" y2="801.50" stroke="rgba(255,255,255,0.55)" stroke-width="1"/>
<line x1="437.85" y1="759.65" x2="437.85" y2="801.50" stroke="rgba(255,255,255,0.55)" stroke-width="1"/>
<line x1="449.40" y1="766.68" x2="449.40" y2="801.50" stroke="rgba(255,255,255,0.55)" stroke-width="1"/>
<line x1="460.95" y1="766.68" x2="460.95" y2="801.50" stroke="rgba(255,255,255,0.55)" stroke-width="1"/>
<line x1="472.50" y1="766.16" x2="472.50" y2="801.50" stroke="rgba(255,255,255,0.55)" stroke-width="1"/>
<line x1="484.05" y1="756.86" x2="484.05" y2="801.50" stroke="rgba(255,255,255,0.55)" stroke-width="1"/>
<line x1="495.60" y1="743.43" x2="495.60" y2="801.50" stroke="rgba(255,255,255,0.55)" stroke-width="1"/>
<line x1="507.15" y1="716.35" x2="507.15" y2="801.50" stroke="rgba(255,255,255,0.55)" stroke-width="1"/>
<line x1="518.70" y1="701.27" x2="518.70" y2="801.50" stroke="rgba(255,255,255,0.55)" stroke-width="1"/>
<line x1="530.25" y1="715.32" x2="530.25" y2="801.50" stroke="rgba(255,255,255,0.55)" stroke-width="1"/>
<line x1="541.80" y1="746.63" x2="541.80" y2="801.50" stroke="rgba(255,255,255,0.55)" stroke-width="1"/>
<line x1="553.35" y1="761.41" x2="553.35" y2="801.50" stroke="rgba(255,255,255,0.55)" stroke-width="1"/>
<line x1="564.90" y1="767.19" x2="564.90" y2="801.50" stroke="rgba(255,255,255,0.55)" stroke-width="1"/>
<line x1="576.45" y1="767.19" x2="576.45" y2="801.50" stroke="rgba(255,255,255,0.55)" stroke-width="1"/>
<line x1="673.5" y1="677.5" x2="1028" y2="677.5" stroke="rgba(0,0,0,0.1)" stroke-width="1"/>
<text x="671.5" y="681.4" text-anchor="end" font-size="12" fill="#666">12</text>
<line x1="673.5" y1="698.5" x2="1028" y2="698.5" stroke="rgba(0,0,0,0.1)" stroke-width="1"/>
<text x="671.5" y="702.1" text-anchor="end" font-size="12" fill="#666">10</text>
<line x1="673.5" y1="718.5" x2="1028" y2="718.5" stroke="rgba(0,0,0,0.1)" stroke-width="1"/>
<text x="671.5" y="722.7" text-anchor="end" font-size="12" fill="#666">8</text>
<line x1="673.5" y1="739.5" x2="1028" y2="739.5" stroke="rgba(0,0,0,0.1)" stroke-width="1"/>
<text x="671.5" y="743.4" text-anchor="end" font-size="12" fill="#666">6</text>
<line x1="673.5" y1="760.5" x2="1028" y2="760.5" stroke="rgba(0,0,0,0.1)" stroke-width="1"/>
<text x="671.5" y="764.1" text-anchor="end" font-size="12" fill="#666">4</text>
<line x1="673.5" y1="780.5" x2="1028" y2="780.5" stroke="rgba(0,0,0,0.1)" stroke-width="1"/>
<text x="671.5" y="784.7" text-anchor="end" font-size="12" fill="#666">2</text>
<line x1="673.5" y1="801.5" x2="1028" y2="801.5" stroke="rgba(0,0,0,0.19)" stroke-width="1"/>
<text x="671.5" y="805.4" text-anchor="end" font-size="12" fill="#666">0</text>
<line x1="681.5" y1="677.0" x2="681.5" y2="802.0" stroke="rgba(0,0,0,0.19)" stroke-width="1"/>
<line x1="825.5" y1="677.0" x2="825.5" y2="809.5" stroke="rgba(0,0,0,0.1)" stroke-width="1"/>
<line x1="1010.5" y1="677.0" x2="1010.5" y2="809.5" stroke="rgba(0,0,0,0.1)" stroke-width="1"/>
<text x="687.3" y="823.5" text-anchor="middle" font-size="12" fill="#666">558</text>
<text x="779.7" y="823.5" text-anchor="middle" font-size="12" fill="#666">566</text>
<text x="872.1" y="823.5" text-anchor="middle" font-size="12" fill="#666">574</text>
<text x="964.5" y="823.5" text-anchor="middle" font-size="12" fill="#666">582</text>
<text x="840.5" y="663.6" text-anchor="middle" font-size="12" font-weight="bold" fill="#666">Q (BEP)</text>
<rect x="681.50" y="735.16" width="11.55" height="66.34" fill="#008000"/>
<rect x="693.05" y="701.78" width="11.55" height="99.72" fill="#008000"/>
<rect x="704.60" y="679.98" width="11.55" height="121.52" fill="#008000"/>
<rect x="716.15" y="678.02" width="11.55" height="123.48" fill="#008000"/>
<rect x="727.70" y="678.02" width="11.55" height="123.48" fill="#008000"/>
<rect x="739.25" y="699.30" width="11.55" height="102.20" fill="#008000"/>
<rect x="750.80" y="718.32" width="11.55" height="83.18" fill="#008000"/>
<rect x="762.35" y="744.87" width="11.55" height="56.63" fill="#ffff00"/>
<rect x="773.90" y="754.17" width="11.55" height="47.33" fill="#ffff00"/>
<rect x="785.45" y="750.35" width="11.55" height="51.15" fill="#ffff00"/>
<rect x="797.00" y="740.64" width="11.55" height="60.86" fill="#ffff00"/>
<rect x="808.55" y="695.58" width="11.55" height="105.92" fill="#008000"/>
<rect x="820.10" y="679.57" width="11.55" height="121.93" fill="#008000"/>
<rect x="831.65" y="678.02" width="11.55" height="123.48" fill="#008000"/>
<rect x="843.20" y="678.22" width="11.55" height="123.28" fill="#008000"/>
<rect x="854.75" y="690.31" width="11.55" height="111.19" fill="#008000"/>
<rect x="866.30" y="721.31" width="11.55" height="80.19" fill="#008000"/>
<rect x="877.85" y="746.42" width="11.55" height="55.08" fill="#ffff00"/>
<rect x="889.40" y="752.62" width="11.55" height="48.88" fill="#ffff00"/>
<rect x="900.95" y="747.87" width="11.55" height="53.63" fill="#ffff00"/>
<rect x="912.50" y="727.31" width="11.55" height="74.19" fill="#008000"/>
<rect x="924.05" y="690.31" width="11.55" height="111.19" fill="#008000"/>
<rect x="935.60" y="678.53" width="11.55" height="122.97" fill="#008000"/>
<rect x="947.15" y="678.02" width="11.55" height="123.48" fill="#008000"/>
<rect x="958.70" y="678.53" width="11.55" height="122.97" fill="#008000"/>
<rect x="970.25" y="691.76" width="11.55" height="109.74" fill="#008000"/>
<rect x="981.80" y="725.34" width="11.55" height="76.16" fill="#008000"/>
<rect x="993.35" y="748.39" width="11.55" height="53.11" fill="#ffff00"/>
<rect x="1004.90" y="753.14" width="11.55" height="48.36" fill="#ffff00"/>
<rect x="1016.45" y="747.35" width="11.55" height="54.15" fill="#ffff00"/>
<line x1="693.05" y1="735.16" x2="693.05" y2="801.50" stroke="rgba(255,255,255,0.55)" stroke-width="1"/>
<line x1="704.60" y1="701.78" x2="704.60" y2="801.50" stroke="rgba(255,255,255,0.55)" stroke-width="1"/>
<line x1="716.15" y1="679.98" x2="716.15" y2="801.50" stroke="rgba(255,255,255,0.55)" stroke-width="1"/>
<line x1="727.70" y1="678.02" x2="727.70" y2="801.50" stroke="rgba(255,255,255,0.55)" stroke-width="1"/>
<line x1="739.25" y1="699.30" x2="739.25" y2="801.50" stroke="rgba(255,255,255,0.55)" stroke-width="1"/>
<line x1="750.80" y1="718.32" x2="750.80" y2="801.50" stroke="rgba(255,255,255,0.55)" stroke-width="1"/>
<line x1="762.35" y1="744.87" x2="762.35" y2="801.50" stroke="rgba(255,255,255,0.55)" stroke-width="1"/>
<line x1="773.90" y1="754.17" x2="773.90" y2="801.50" stroke="rgba(255,255,255,0.55)" stroke-width="1"/>
<line x1="785.45" y1="754.17" x2="785.45" y2="801.50" stroke="rgba(255,255,255,0.55)" stroke-width="1"/>
<line x1="797.00" y1="750.35" x2="797.00" y2="801.50" stroke="rgba(255,255,255,0.55)" stroke-width="1"/>
<line x1="808.55" y1="740.64" x2="808.55" y2="801.50" stroke="rgba(255,255,255,0.55)" stroke-width="1"/>
<line x1="820.10" y1="695.58" x2="820.10" y2="801.50" stroke="rgba(255,255,255,0.55)" stroke-width="1"/>
<line x1="831.65" y1="679.57" x2="831.65" y2="801.50" stroke="rgba(255,255,255,0.55)" stroke-width="1"/>
<line x1="843.20" y1="678.22" x2="843.20" y2="801.50" stroke="rgba(255,255,255,0.55)" stroke-width="1"/>
<line x1="854.75" y1="690.31" x2="854.75" y2="801.50" stroke="rgba(255,255,255,0.55)" stroke-width="1"/>
<line x1="866.30" y1="721.31" x2="866.30" y2="801.50" stroke="rgba(255,255,255,0.55)" stroke-width="1"/>
<line x1="877.85" y1="746.42" x2="877.85" y2="801.50" stroke="rgba(255,255,255,0.55)" stroke-width="1"/>
<line x1="889.40" y1="752.62" x2="889.40" y2="801.50" stroke="rgba(255,255,255,0.55)" stroke-width="1"/>
<line x1="900.95" y1="752.62" x2="900.95" y2="801.50" stroke="rgba(255,255,255,0.55)" stroke-width="1"/>
<line x1="912.50" y1="747.87" x2="912.50" y2="801.50" stroke="rgba(255,255,255,0.55)" stroke-width="1"/>
<line x1="924.05" y1="727.31" x2="924.05" y2="801.50" stroke="rgba(255,255,255,0.55)" stroke-width="1"/>
<line x1="935.60" y1="690.31" x2="935.60" y2="801.50" stroke="rgba(255,255,255,0.55)" stroke-width="1"/>
<line x1="947.15" y1="678.53" x2="947.15" y2="801.50" stroke="rgba(255,255,255,0.55)" stroke-width="1"/>
<line x1="958.70" y1="678.53" x2="958.70" y2="801.50" stroke="rgba(255,255,255,0.55)" stroke-width="1"/>
<line x1="970.25" y1="691.76" x2="970.25" y2="801.50" stroke="rgba(255,255,255,0.55)" stroke-width="1"/>
<line x1="981.80" y1="725.34" x2="981.80" y2="801.50" stroke="rgba(255,255,255,0.55)" stroke-width="1"/>
<line x1="993.35" y1="748.39" x2="993.35" y2="801.50" stroke="rgba(255,255,255,0.55)" stroke-width="1"/>
<line x1="1004.90" y1="753.14" x2="1004.90" y2="801.50" stroke="rgba(255,255,255,0.55)" stroke-width="1"/>
<line x1="1016.45" y1="753.14" x2="1016.45" y2="801.50" stroke="rgba(255,255,255,0.55)" stroke-width="1"/>
<line x1="1113.5" y1="677.5" x2="1468" y2="677.5" stroke="rgba(0,0,0,0.1)" stroke-width="1"/>
<text x="1111.5" y="681.4" text-anchor="end" font-size="12" fill="#666">12</text>
<line x1="1113.5" y1="698.5" x2="1468" y2="698.5" stroke="rgba(0,0,0,0.1)" stroke-width="1"/>
<text x="1111.5" y="702.1" text-anchor="end" font-size="12" fill="#666">10</text>
<line x1="1113.5" y1="718.5" x2="1468" y2="718.5" stroke="rgba(0,0,0,0.1)" stroke-width="1"/>
<text x="1111.5" y="722.7" text-anchor="end" font-size="12" fill="#666">8</text>
<line x1="1113.5" y1="739.5" x2="1468" y2="739.5" stroke="rgba(0,0,0,0.1)" stroke-width="1"/>
<text x="1111.5" y="743.4" text-anchor="end" font-size="12" fill="#666">6</text>
<line x1="1113.5" y1="760.5" x2="1468" y2="760.5" stroke="rgba(0,0,0,0.1)" stroke-width="1"/>
<text x="1111.5" y="764.1" text-anchor="end" font-size="12" fill="#666">4</text>
<line x1="1113.5" y1="780.5" x2="1468" y2="780.5" stroke="rgba(0,0,0,0.1)" stroke-width="1"/>
<text x="1111.5" y="784.7" text-anchor="end" font-size="12" fill="#666">2</text>
<line x1="1113.5" y1="801.5" x2="1468" y2="801.5" stroke="rgba(0,0,0,0.19)" stroke-width="1"/>
<text x="1111.5" y="805.4" text-anchor="end" font-size="12" fill="#666">0</text>
<line x1="1121.5" y1="677.0" x2="1121.5" y2="802.0" stroke="rgba(0,0,0,0.19)" stroke-width="1"/>
<line x1="1265.5" y1="677.0" x2="1265.5" y2="809.5" stroke="rgba(0,0,0,0.1)" stroke-width="1"/>
<line x1="1450.5" y1="677.0" x2="1450.5" y2="809.5" stroke="rgba(0,0,0,0.1)" stroke-width="1"/>
<text x="1127.3" y="823.5" text-anchor="middle" font-size="12" fill="#666">557</text>
<text x="1219.7" y="823.5" text-anchor="middle" font-size="12" fill="#666">566</text>
<text x="1312.1" y="823.5" text-anchor="middle" font-size="12" fill="#666">574</text>
<text x="1404.5" y="823.5" text-anchor="middle" font-size="12" fill="#666">582</text>
<text x="1280.5" y="663.6" text-anchor="middle" font-size="12" font-weight="bold" fill="#666">Q (BEP)</text>
<rect x="1121.50" y="774.43" width="11.55" height="27.07" fill="#ff0000"/>
<rect x="1133.05" y="763.47" width="11.55" height="38.03" fill="#ff0000"/>
<rect x="1144.60" y="751.38" width="11.55" height="50.12" fill="#ffff00"/>
<rect x="1156.15" y="733.09" width="11.55" height="68.41" fill="#008000"/>
<rect x="1167.70" y="740.12" width="11.55" height="61.38" fill="#ffff00"/>
<rect x="1179.25" y="752.42" width="11.55" height="49.08" fill="#ffff00"/>
<rect x="1190.80" y="765.44" width="11.55" height="36.06" fill="#ff0000"/>
<rect x="1202.35" y="774.43" width="11.55" height="27.07" fill="#ff0000"/>
<rect x="1213.90" y="779.49" width="11.55" height="22.01" fill="#ff0000"/>
<rect x="1225.45" y="778.97" width="11.55" height="22.53" fill="#ff0000"/>
<rect x="1237.00" y="772.67" width="11.55" height="28.83" fill="#ff0000"/>
<rect x="1248.55" y="761.41" width="11.55" height="40.09" fill="#ff0000"/>
<rect x="1260.10" y="748.59" width="11.55" height="52.91" fill="#ffff00"/>
<rect x="1271.65" y="742.91" width="11.55" height="58.59" fill="#ffff00"/>
<rect x="1283.20" y="745.18" width="11.55" height="56.32" fill="#ffff00"/>
<rect x="1294.75" y="755.21" width="11.55" height="46.29" fill="#ffff00"/>
<rect x="1306.30" y="766.68" width="11.55" height="34.82" fill="#ff0000"/>
<rect x="1317.85" y="775.67" width="11.55" height="25.83" fill="#ff0000"/>
<rect x="1329.40" y="780.01" width="11.55" height="21.49" fill="#ff0000"/>
<rect x="1340.95" y="778.25" width="11.55" height="23.25" fill="#ff0000"/>
<rect x="1352.50" y="770.91" width="11.55" height="30.59" fill="#ff0000"/>
<rect x="1364.05" y="759.44" width="11.55" height="42.06" fill="#ffff00"/>
<rect x="1375.60" y="747.35" width="11.55" height="54.15" fill="#ffff00"/>
<rect x="1387.15" y="741.15" width="11.55" height="60.35" fill="#ffff00"/>
<rect x="1398.70" y="741.36" width="11.55" height="60.14" fill="#ffff00"/>
<rect x="1410.25" y="756.86" width="11.55" height="44.64" fill="#ffff00"/>
<rect x="1421.80" y="769.16" width="11.55" height="32.34" fill="#ff0000"/>
<rect x="1433.35" y="776.91" width="11.55" height="24.59" fill="#ff0000"/>
<rect x="1444.90" y="780.42" width="11.55" height="21.08" fill="#ff0000"/>
<rect x="1456.45" y="777.42" width="11.55" height="24.08" fill="#ff0000"/>
<line x1="1133.05" y1="774.43" x2="1133.05" y2="801.50" stroke="rgba(255,255,255,0.55)" stroke-width="1"/>
<line x1="1144.60" y1="763.47" x2="1144.60" y2="801.50" stroke="rgba(255,255,255,0.55)" stroke-width="1"/>
<line x1="1156.15" y1="751.38" x2="1156.15" y2="801.50" stroke="rgba(255,255,255,0.55)" stroke-width="1"/>
<line x1="1167.70" y1="740.12" x2="1167.70" y2="801.50" stroke="rgba(255,255,255,0.55)" stroke-width="1"/>
<line x1="1179.25" y1="752.42" x2="1179.25" y2="801.50" stroke="rgba(255,255,255,0.55)" stroke-width="1"/>
<line x1="1190.80" y1="765.44" x2="1190.80" y2="801.50" stroke="rgba(255,255,255,0.55)" stroke-width="1"/>
<line x1="1202.35" y1="774.43" x2="1202.35" y2="801.50" stroke="rgba(255,255,255,0.55)" stroke-width="1"/>
<line x1="1213.90" y1="779.49" x2="1213.90" y2="801.50" stroke="rgba(255,255,255,0.55)" stroke-width="1"/>
<line x1="1225.45" y1="779.49" x2="1225.45" y2="801.50" stroke="rgba(255,255,255,0.55)" stroke-width="1"/>
<line x1="1237.00" y1="778.97" x2="1237.00" y2="801.50" stroke="rgba(255,255,255,0.55)" stroke-width="1"/>
<line x1="1248.55" y1="772.67" x2="1248.55" y2="801.50" stroke="rgba(255,255,255,0.55)" stroke-width="1"/>
<line x1="1260.10" y1="761.41" x2="1260.10" y2="801.50" stroke="rgba(255,255,255,0.55)" stroke-width="1"/>
<line x1="1271.65" y1="748.59" x2="1271.65" y2="801.50" stroke="rgba(255,255,255,0.55)" stroke-width="1"/>
<line x1="1283.20" y1="745.18" x2="1283.20" y2="801.50" stroke="rgba(255,255,255,0.55)" stroke-width="1"/>
<line x1="1294.75" y1="755.21" x2="1294.75" y2="801.50" stroke="rgba(255,255,255,0.55)" stroke-width="1"/>
<line x1="1306.30" y1="766.68" x2="1306.30" y2="801.50" stroke="rgba(255,255,255,0.55)" stroke-width="1"/>
<line x1="1317.85" y1="775.67" x2="1317.85" y2="801.50" stroke="rgba(255,255,255,0.55)" stroke-width="1"/>
<line x1="1329.40" y1="780.01" x2="1329.40" y2="801.50" stroke="rgba(255,255,255,0.55)" stroke-width="1"/>
<line x1="1340.95" y1="780.01" x2="1340.95" y2="801.50" stroke="rgba(255,255,255,0.55)" stroke-width="1"/>
<line x1="1352.50" y1="778.25" x2="1352.50" y2="801.50" stroke="rgba(255,255,255,0.55)" stroke-width="1"/>
<line x1="1364.05" y1="770.91" x2="1364.05" y2="801.50" stroke="rgba(255,255,255,0.55)" stroke-width="1"/>
<line x1="1375.60" y1="759.44" x2="1375.60" y2="801.50" stroke="rgba(255,255,255,0.55)" stroke-width="1"/>
<line x1="1387.15" y1="747.35" x2="1387.15" y2="801.50" stroke="rgba(255,255,255,0.55)" stroke-width="1"/>
<line x1="1398.70" y1="741.36" x2="1398.70" y2="801.50" stroke="rgba(255,255,255,0.55)" stroke-width="1"/>
<line x1="1410.25" y1="756.86" x2="1410.25" y2="801.50" stroke="rgba(255,255,255,0.55)" stroke-width="1"/>
<line x1="1421.80" y1="769.16" x2="1421.80" y2="801.50" stroke="rgba(255,255,255,0.55)" stroke-width="1"/>
<line x1="1433.35" y1="776.91" x2="1433.35" y2="801.50" stroke="rgba(255,255,255,0.55)" stroke-width="1"/>
<line x1="1444.90" y1="780.42" x2="1444.90" y2="801.50" stroke="rgba(255,255,255,0.55)" stroke-width="1"/>
<line x1="1456.45" y1="780.42" x2="1456.45" y2="801.50" stroke="rgba(255,255,255,0.55)" stroke-width="1"/>
<line x1="240.2" y1="938.5" x2="583.15" y2="938.5" stroke="rgba(0,0,0,0.1)" stroke-width="1"/>
<text x="238.8" y="942.4" text-anchor="end" font-size="12" fill="#666">-2.0</text>
<line x1="240.2" y1="959.5" x2="583.15" y2="959.5" stroke="rgba(0,0,0,0.1)" stroke-width="1"/>
<text x="238.8" y="963.1" text-anchor="end" font-size="12" fill="#666">-2.5</text>
<line x1="240.2" y1="979.5" x2="583.15" y2="979.5" stroke="rgba(0,0,0,0.1)" stroke-width="1"/>
<text x="238.8" y="983.7" text-anchor="end" font-size="12" fill="#666">-3.0</text>
<line x1="240.2" y1="1000.5" x2="583.15" y2="1000.5" stroke="rgba(0,0,0,0.1)" stroke-width="1"/>
<text x="238.8" y="1004.4" text-anchor="end" font-size="12" fill="#666">-3.5</text>
<line x1="240.2" y1="1021.5" x2="583.15" y2="1021.5" stroke="rgba(0,0,0,0.1)" stroke-width="1"/>
<text x="238.8" y="1025.1" text-anchor="end" font-size="12" fill="#666">-4.0</text>
<line x1="240.2" y1="1041.5" x2="583.15" y2="1041.5" stroke="rgba(0,0,0,0.1)" stroke-width="1"/>
<text x="238.8" y="1045.7" text-anchor="end" font-size="12" fill="#666">-4.5</text>
<line x1="240.2" y1="1062.5" x2="583.15" y2="1062.5" stroke="rgba(0,0,0,0.19)" stroke-width="1"/>
<text x="238.8" y="1066.4" text-anchor="end" font-size="12" fill="#666">-5.0</text>
<line x1="248.5" y1="938.0" x2="248.5" y2="1070.5" stroke="rgba(0,0,0,0.19)" stroke-width="1"/>
<text x="248.2" y="1084.5" text-anchor="middle" font-size="12" fill="#666">557</text>
<line x1="340.5" y1="938.0" x2="340.5" y2="1070.5" stroke="rgba(0,0,0,0.1)" stroke-width="1"/>
<text x="340.6" y="1084.5" text-anchor="middle" font-size="12" fill="#666">566</text>
<line x1="433.5" y1="938.0" x2="433.5" y2="1070.5" stroke="rgba(0,0,0,0.1)" stroke-width="1"/>
<text x="433.0" y="1084.5" text-anchor="middle" font-size="12" fill="#666">574</text>
<line x1="525.5" y1="938.0" x2="525.5" y2="1070.5" stroke="rgba(0,0,0,0.1)" stroke-width="1"/>
<text x="525.4" y="1084.5" text-anchor="middle" font-size="12" fill="#666">582</text>
<text x="400.5" y="924.6" text-anchor="middle" font-size="12" font-weight="bold" fill="#666">Freq Offset (kHz)</text>
<path d="M248.20 1002.57 L259.75 1003.81 L271.30 1002.98 L282.85 1002.98 L294.40 1002.98 L305.95 1002.57 L317.50 1002.57 L329.05 1002.57 L340.60 1002.98 L352.15 1002.57 L363.70 1002.57 L375.25 1002.57 L386.80 1002.98 L398.35 1002.57 L409.90 1002.98 L421.45 1002.98 L433.00 1002.98 L444.55 1002.57 L456.10 1002.98 L467.65 1002.98 L479.20 1002.98 L490.75 1002.98 L502.30 1002.98 L513.85 1002.98 L525.40 1002.98 L536.95 1002.98 L548.50 1002.98 L560.05 1003.39 L571.60 1002.98 L583.15 1002.57" fill="none" stroke="#0000ff" stroke-width="3" stroke-linejoin="round"/>
<circle cx="248.20" cy="1002.57" r="3.6" fill="#0000ff"/>
<circle cx="259.75" cy="1003.81" r="3.6" fill="#0000ff"/>
<circle cx="271.30" cy="1002.98" r="3.6" fill="#0000ff"/>
<circle cx="282.85" cy="1002.98" r="3.6" fill="#0000ff"/>
<circle cx="294.40" cy="1002.98" r="3.6" fill="#0000ff"/>
<circle cx="305.95" cy="1002.57" r="3.6" fill="#0000ff"/>
<circle cx="317.50" cy="1002.57" r="3.6" fill="#0000ff"/>
<circle cx="329.05" cy="1002.57" r="3.6" fill="#0000ff"/>
<circle cx="340.60" cy="1002.98" r="3.6" fill="#0000ff"/>
<circle cx="352.15" cy="1002.57" r="3.6" fill="#0000ff"/>
<circle cx="363.70" cy="1002.57" r="3.6" fill="#0000ff"/>
<circle cx="375.25" cy="1002.57" r="3.6" fill="#0000ff"/>
<circle cx="386.80" cy="1002.98" r="3.6" fill="#0000ff"/>
<circle cx="398.35" cy="1002.57" r="3.6" fill="#0000ff"/>
<circle cx="409.90" cy="1002.98" r="3.6" fill="#0000ff"/>
<circle cx="421.45" cy="1002.98" r="3.6" fill="#0000ff"/>
<circle cx="433.00" cy="1002.98" r="3.6" fill="#0000ff"/>
<circle cx="444.55" cy="1002.57" r="3.6" fill="#0000ff"/>
<circle cx="456.10" cy="1002.98" r="3.6" fill="#0000ff"/>
<circle cx="467.65" cy="1002.98" r="3.6" fill="#0000ff"/>
<circle cx="479.20" cy="1002.98" r="3.6" fill="#0000ff"/>
<circle cx="490.75" cy="1002.98" r="3.6" fill="#0000ff"/>
<circle cx="502.30" cy="1002.98" r="3.6" fill="#0000ff"/>
<circle cx="513.85" cy="1002.98" r="3.6" fill="#0000ff"/>
<circle cx="525.40" cy="1002.98" r="3.6" fill="#0000ff"/>
<circle cx="536.95" cy="1002.98" r="3.6" fill="#0000ff"/>
<circle cx="548.50" cy="1002.98" r="3.6" fill="#0000ff"/>
<circle cx="560.05" cy="1003.39" r="3.6" fill="#0000ff"/>
<circle cx="571.60" cy="1002.98" r="3.6" fill="#0000ff"/>
<circle cx="583.15" cy="1002.57" r="3.6" fill="#0000ff"/>
<line x1="680.2" y1="938.5" x2="1023.15" y2="938.5" stroke="rgba(0,0,0,0.1)" stroke-width="1"/>
<text x="678.8" y="942.4" text-anchor="end" font-size="12" fill="#666">-2.0</text>
<line x1="680.2" y1="959.5" x2="1023.15" y2="959.5" stroke="rgba(0,0,0,0.1)" stroke-width="1"/>
<text x="678.8" y="963.1" text-anchor="end" font-size="12" fill="#666">-2.5</text>
<line x1="680.2" y1="979.5" x2="1023.15" y2="979.5" stroke="rgba(0,0,0,0.1)" stroke-width="1"/>
<text x="678.8" y="983.7" text-anchor="end" font-size="12" fill="#666">-3.0</text>
<line x1="680.2" y1="1000.5" x2="1023.15" y2="1000.5" stroke="rgba(0,0,0,0.1)" stroke-width="1"/>
<text x="678.8" y="1004.4" text-anchor="end" font-size="12" fill="#666">-3.5</text>
<line x1="680.2" y1="1021.5" x2="1023.15" y2="1021.5" stroke="rgba(0,0,0,0.1)" stroke-width="1"/>
<text x="678.8" y="1025.1" text-anchor="end" font-size="12" fill="#666">-4.0</text>
<line x1="680.2" y1="1041.5" x2="1023.15" y2="1041.5" stroke="rgba(0,0,0,0.1)" stroke-width="1"/>
<text x="678.8" y="1045.7" text-anchor="end" font-size="12" fill="#666">-4.5</text>
<line x1="680.2" y1="1062.5" x2="1023.15" y2="1062.5" stroke="rgba(0,0,0,0.19)" stroke-width="1"/>
<text x="678.8" y="1066.4" text-anchor="end" font-size="12" fill="#666">-5.0</text>
<line x1="688.5" y1="938.0" x2="688.5" y2="1070.5" stroke="rgba(0,0,0,0.19)" stroke-width="1"/>
<text x="688.2" y="1084.5" text-anchor="middle" font-size="12" fill="#666">558</text>
<line x1="780.5" y1="938.0" x2="780.5" y2="1070.5" stroke="rgba(0,0,0,0.1)" stroke-width="1"/>
<text x="780.6" y="1084.5" text-anchor="middle" font-size="12" fill="#666">566</text>
<line x1="873.5" y1="938.0" x2="873.5" y2="1070.5" stroke="rgba(0,0,0,0.1)" stroke-width="1"/>
<text x="873.0" y="1084.5" text-anchor="middle" font-size="12" fill="#666">574</text>
<line x1="965.5" y1="938.0" x2="965.5" y2="1070.5" stroke="rgba(0,0,0,0.1)" stroke-width="1"/>
<text x="965.4" y="1084.5" text-anchor="middle" font-size="12" fill="#666">582</text>
<text x="840.5" y="924.6" text-anchor="middle" font-size="12" font-weight="bold" fill="#666">Freq Offset (kHz)</text>
<path d="M688.20 988.51 L699.75 988.51 L711.30 987.69 L722.85 988.51 L734.40 988.51 L745.95 988.51 L757.50 988.51 L769.05 988.51 L780.60 988.51 L792.15 989.34 L803.70 987.69 L815.25 988.51 L826.80 987.69 L838.35 988.51 L849.90 988.51 L861.45 987.27 L873.00 988.51 L884.55 989.34 L896.10 988.51 L907.65 988.51 L919.20 988.51 L930.75 988.51 L942.30 988.51 L953.85 989.34 L965.40 988.51 L976.95 987.69 L988.50 988.51 L1000.05 988.51 L1011.60 989.34 L1023.15 988.51" fill="none" stroke="#0000ff" stroke-width="3" stroke-linejoin="round"/>
<circle cx="688.20" cy="988.51" r="3.6" fill="#0000ff"/>
<circle cx="699.75" cy="988.51" r="3.6" fill="#0000ff"/>
<circle cx="711.30" cy="987.69" r="3.6" fill="#0000ff"/>
<circle cx="722.85" cy="988.51" r="3.6" fill="#0000ff"/>
<circle cx="734.40" cy="988.51" r="3.6" fill="#0000ff"/>
<circle cx="745.95" cy="988.51" r="3.6" fill="#0000ff"/>
<circle cx="757.50" cy="988.51" r="3.6" fill="#0000ff"/>
<circle cx="769.05" cy="988.51" r="3.6" fill="#0000ff"/>
<circle cx="780.60" cy="988.51" r="3.6" fill="#0000ff"/>
<circle cx="792.15" cy="989.34" r="3.6" fill="#0000ff"/>
<circle cx="803.70" cy="987.69" r="3.6" fill="#0000ff"/>
<circle cx="815.25" cy="988.51" r="3.6" fill="#0000ff"/>
<circle cx="826.80" cy="987.69" r="3.6" fill="#0000ff"/>
<circle cx="838.35" cy="988.51" r="3.6" fill="#0000ff"/>
<circle cx="849.90" cy="988.51" r="3.6" fill="#0000ff"/>
<circle cx="861.45" cy="987.27" r="3.6" fill="#0000ff"/>
<circle cx="873.00" cy="988.51" r="3.6" fill="#0000ff"/>
<circle cx="884.55" cy="989.34" r="3.6" fill="#0000ff"/>
<circle cx="896.10" cy="988.51" r="3.6" fill="#0000ff"/>
<circle cx="907.65" cy="988.51" r="3.6" fill="#0000ff"/>
<circle cx="919.20" cy="988.51" r="3.6" fill="#0000ff"/>
<circle cx="930.75" cy="988.51" r="3.6" fill="#0000ff"/>
<circle cx="942.30" cy="988.51" r="3.6" fill="#0000ff"/>
<circle cx="953.85" cy="989.34" r="3.6" fill="#0000ff"/>
<circle cx="965.40" cy="988.51" r="3.6" fill="#0000ff"/>
<circle cx="976.95" cy="987.69" r="3.6" fill="#0000ff"/>
<circle cx="988.50" cy="988.51" r="3.6" fill="#0000ff"/>
<circle cx="1000.05" cy="988.51" r="3.6" fill="#0000ff"/>
<circle cx="1011.60" cy="989.34" r="3.6" fill="#0000ff"/>
<circle cx="1023.15" cy="988.51" r="3.6" fill="#0000ff"/>
<line x1="1120.2" y1="938.5" x2="1463.15" y2="938.5" stroke="rgba(0,0,0,0.1)" stroke-width="1"/>
<text x="1118.8" y="942.4" text-anchor="end" font-size="12" fill="#666">-2.0</text>
<line x1="1120.2" y1="959.5" x2="1463.15" y2="959.5" stroke="rgba(0,0,0,0.1)" stroke-width="1"/>
<text x="1118.8" y="963.1" text-anchor="end" font-size="12" fill="#666">-2.5</text>
<line x1="1120.2" y1="979.5" x2="1463.15" y2="979.5" stroke="rgba(0,0,0,0.1)" stroke-width="1"/>
<text x="1118.8" y="983.7" text-anchor="end" font-size="12" fill="#666">-3.0</text>
<line x1="1120.2" y1="1000.5" x2="1463.15" y2="1000.5" stroke="rgba(0,0,0,0.1)" stroke-width="1"/>
<text x="1118.8" y="1004.4" text-anchor="end" font-size="12" fill="#666">-3.5</text>
<line x1="1120.2" y1="1021.5" x2="1463.15" y2="1021.5" stroke="rgba(0,0,0,0.1)" stroke-width="1"/>
<text x="1118.8" y="1025.1" text-anchor="end" font-size="12" fill="#666">-4.0</text>
<line x1="1120.2" y1="1041.5" x2="1463.15" y2="1041.5" stroke="rgba(0,0,0,0.1)" stroke-width="1"/>
<text x="1118.8" y="1045.7" text-anchor="end" font-size="12" fill="#666">-4.5</text>
<line x1="1120.2" y1="1062.5" x2="1463.15" y2="1062.5" stroke="rgba(0,0,0,0.19)" stroke-width="1"/>
<text x="1118.8" y="1066.4" text-anchor="end" font-size="12" fill="#666">-5.0</text>
<line x1="1128.5" y1="938.0" x2="1128.5" y2="1070.5" stroke="rgba(0,0,0,0.19)" stroke-width="1"/>
<text x="1128.2" y="1084.5" text-anchor="middle" font-size="12" fill="#666">557</text>
<line x1="1220.5" y1="938.0" x2="1220.5" y2="1070.5" stroke="rgba(0,0,0,0.1)" stroke-width="1"/>
<text x="1220.6" y="1084.5" text-anchor="middle" font-size="12" fill="#666">566</text>
<line x1="1313.5" y1="938.0" x2="1313.5" y2="1070.5" stroke="rgba(0,0,0,0.1)" stroke-width="1"/>
<text x="1313.0" y="1084.5" text-anchor="middle" font-size="12" fill="#666">574</text>
<line x1="1405.5" y1="938.0" x2="1405.5" y2="1070.5" stroke="rgba(0,0,0,0.1)" stroke-width="1"/>
<text x="1405.4" y="1084.5" text-anchor="middle" font-size="12" fill="#666">582</text>
<text x="1280.5" y="924.6" text-anchor="middle" font-size="12" font-weight="bold" fill="#666">Freq Offset (kHz)</text>
<path d="M1128.20 976.60 L1139.75 976.60 L1151.30 979.09 L1162.85 977.09 L1174.40 979.09 L1185.95 977.59 L1197.50 977.84 L1209.05 978.84 L1220.60 975.60 L1232.15 977.59 L1243.70 977.09 L1255.25 977.09 L1266.80 978.59 L1278.35 976.35 L1289.90 978.84 L1301.45 976.85 L1313.00 975.60 L1324.55 977.59 L1336.10 977.84 L1347.65 976.85 L1359.20 978.84 L1370.75 978.84 L1382.30 976.60 L1393.85 976.60 L1405.40 976.35 L1416.95 976.35 L1428.50 977.59 L1440.05 977.09 L1451.60 978.84 L1463.15 977.59" fill="none" stroke="#0000ff" stroke-width="3" stroke-linejoin="round"/>
<circle cx="1128.20" cy="976.60" r="3.6" fill="#0000ff"/>
<circle cx="1139.75" cy="976.60" r="3.6" fill="#0000ff"/>
<circle cx="1151.30" cy="979.09" r="3.6" fill="#0000ff"/>
<circle cx="1162.85" cy="977.09" r="3.6" fill="#0000ff"/>
<circle cx="1174.40" cy="979.09" r="3.6" fill="#0000ff"/>
<circle cx="1185.95" cy="977.59" r="3.6" fill="#0000ff"/>
<circle cx="1197.50" cy="977.84" r="3.6" fill="#0000ff"/>
<circle cx="1209.05" cy="978.84" r="3.6" fill="#0000ff"/>
<circle cx="1220.60" cy="975.60" r="3.6" fill="#0000ff"/>
<circle cx="1232.15" cy="977.59" r="3.6" fill="#0000ff"/>
<circle cx="1243.70" cy="977.09" r="3.6" fill="#0000ff"/>
<circle cx="1255.25" cy="977.09" r="3.6" fill="#0000ff"/>
<circle cx="1266.80" cy="978.59" r="3.6" fill="#0000ff"/>
<circle cx="1278.35" cy="976.35" r="3.6" fill="#0000ff"/>
<circle cx="1289.90" cy="978.84" r="3.6" fill="#0000ff"/>
<circle cx="1301.45" cy="976.85" r="3.6" fill="#0000ff"/>
<circle cx="1313.00" cy="975.60" r="3.6" fill="#0000ff"/>
<circle cx="1324.55" cy="977.59" r="3.6" fill="#0000ff"/>
<circle cx="1336.10" cy="977.84" r="3.6" fill="#0000ff"/>
<circle cx="1347.65" cy="976.85" r="3.6" fill="#0000ff"/>
<circle cx="1359.20" cy="978.84" r="3.6" fill="#0000ff"/>
<circle cx="1370.75" cy="978.84" r="3.6" fill="#0000ff"/>
<circle cx="1382.30" cy="976.60" r="3.6" fill="#0000ff"/>
<circle cx="1393.85" cy="976.60" r="3.6" fill="#0000ff"/>
<circle cx="1405.40" cy="976.35" r="3.6" fill="#0000ff"/>
<circle cx="1416.95" cy="976.35" r="3.6" fill="#0000ff"/>
<circle cx="1428.50" cy="977.59" r="3.6" fill="#0000ff"/>
<circle cx="1440.05" cy="977.09" r="3.6" fill="#0000ff"/>
<circle cx="1451.60" cy="978.84" r="3.6" fill="#0000ff"/>
<circle cx="1463.15" cy="977.59" r="3.6" fill="#0000ff"/>
<text x="50" y="1177.5" font-size="16" fill="#212529" text-anchor="start" textLength="147.9" lengthAdjust="spacingAndGlyphs">© Copyright 2023 by</text>
<text x="201.8" y="1177.5" font-size="16" fill="#0d6efd" text-anchor="start" textLength="97.8" lengthAdjust="spacingAndGlyphs">Quasonix, Inc.</text>
<rect x="202.8" y="1178.6" width="96.8" height="1" fill="#0d6efd"/>
</svg>
</body></html>
